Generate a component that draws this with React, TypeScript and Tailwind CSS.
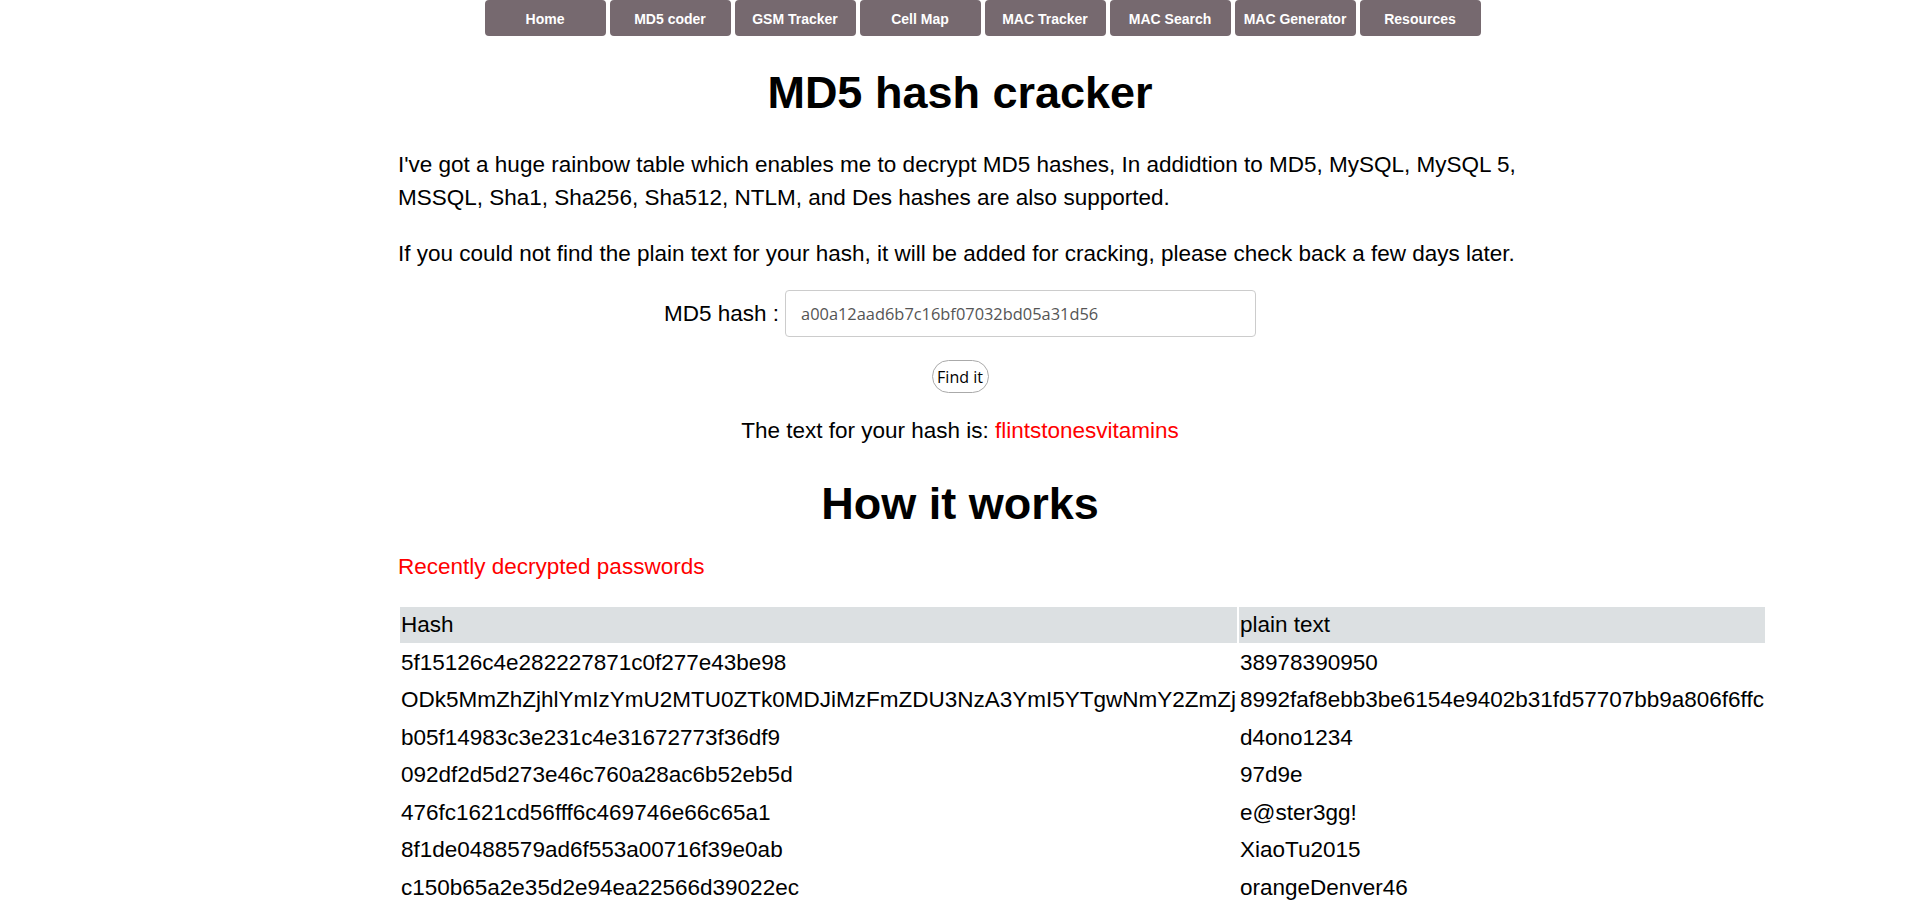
import React from 'react';

const navItems = [
  'Home',
  'MD5 coder',
  'GSM Tracker',
  'Cell Map',
  'MAC Tracker',
  'MAC Search',
  'MAC Generator',
  'Resources',
];

const recent = [
  ['5f15126c4e282227871c0f277e43be98', '38978390950'],
  [
    'ODk5MmZhZjhlYmIzYmU2MTU0ZTk0MDJiMzFmZDU3NzA3YmI5YTgwNmY2ZmZj',
    '8992faf8ebb3be6154e9402b31fd57707bb9a806f6ffc',
  ],
  ['b05f14983c3e231c4e31672773f36df9', 'd4ono1234'],
  ['092df2d5d273e46c760a28ac6b52eb5d', '97d9e'],
  ['476fc1621cd56fff6c469746e66c65a1', 'e@ster3gg!'],
  ['8f1de0488579ad6f553a00716f39e0ab', 'XiaoTu2015'],
  ['c150b65a2e35d2e94ea22566d39022ec', 'orangeDenver46'],
];

export default function App() {
  return (
    <div className="min-h-screen bg-white text-black font-['Liberation_Sans',Arial,sans-serif] text-[22.5px] leading-[33px]">
      {/* Top menu */}
      <nav className="flex justify-center gap-[4px] pl-[45px]">
        {navItems.map((item) => (
          <a
            key={item}
            href="#"
            className="flex h-[36px] w-[121px] items-center justify-center rounded-[4px] bg-[#76696f] pt-[2px] text-[14px] font-bold text-white"
          >
            {item}
          </a>
        ))}
      </nav>

      <main className="mx-auto w-[1124px]">
        <h1 className="mt-[30px] text-center text-[45px] font-bold leading-[54px]">
          MD5 hash cracker
        </h1>

        <p className="mt-[28px]">
          I've got a huge rainbow table which enables me to decrypt MD5 hashes, In addidtion to MD5, MySQL, MySQL 5,
          MSSQL, Sha1, Sha256, Sha512, NTLM, and Des hashes are also supported.
        </p>
        <p className="mt-[23px]">
          If you could not find the plain text for your hash, it will be added for cracking, please check back a few
          days later.
        </p>

        <form className="mt-[20px] flex flex-col items-center" onSubmit={(e) => e.preventDefault()}>
          <div className="flex items-center gap-[6px]">
            <label htmlFor="hash">MD5 hash :</label>
            <input
              id="hash"
              defaultValue="a00a12aad6b7c16bf07032bd05a31d56"
              className="h-[47px] w-[471px] rounded-[4px] border border-[#cccccc] px-[15px] font-['Open_Sans',sans-serif] text-[16.4px] text-[#555555] outline-none"
            />
          </div>
          <button
            type="submit"
            className="mt-[23px] h-[33px] w-[57px] rounded-full border border-[#aaaaaa] bg-white px-[3px] font-['Open_Sans',sans-serif] text-[16px] leading-none text-black"
          >
            Find it
          </button>
        </form>

        <p className="mt-[21px] text-center">
          The text for your hash is: <span className="text-[#ff0000]">flintstonesvitamins</span>
        </p>

        <h2 className="mt-[30px] text-center text-[45px] font-bold leading-[54px]">How it works</h2>

        <p className="mt-[19px] text-[#ff0000]">Recently decrypted passwords</p>

        <table className="mt-[22px] border-separate border-spacing-[2px] whitespace-nowrap leading-[33.5px]">
          <thead>
            <tr className="bg-[#dce0e2]">
              <th className="p-px text-left font-normal">Hash</th>
              <th className="p-px text-left font-normal">plain text</th>
            </tr>
          </thead>
          <tbody>
            {recent.map(([hash, plain]) => (
              <tr key={hash}>
                <td className="p-px">{hash}</td>
                <td className="p-px">{plain}</td>
              </tr>
            ))}
          </tbody>
        </table>
      </main>
    </div>
  );
}
